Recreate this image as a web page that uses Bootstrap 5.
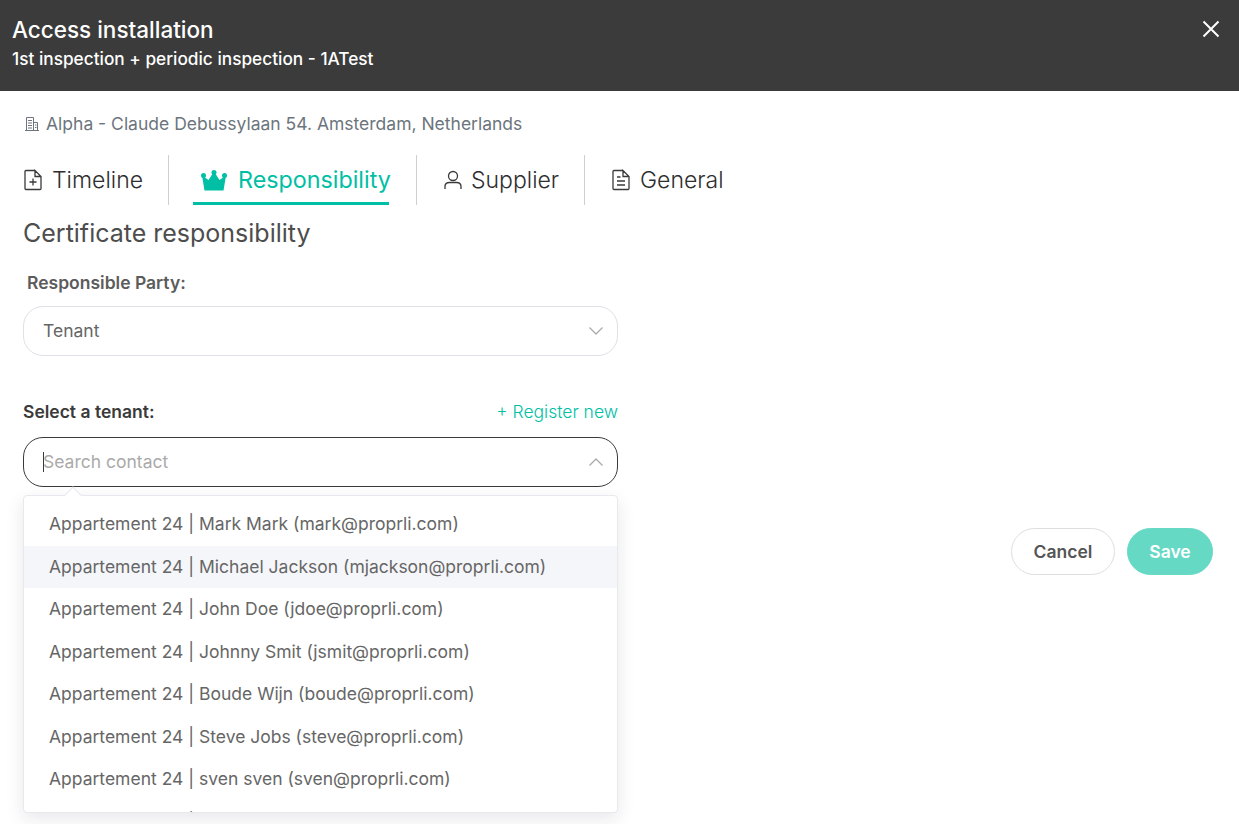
<!DOCTYPE html>
<html lang="en">
<head>
<meta charset="utf-8">
<title>Access installation</title>
<link href="https://cdn.jsdelivr.net/npm/bootstrap@5.3.0/dist/css/bootstrap.min.css" rel="stylesheet">
<style>
html,body{height:100%;}
body{font-family:Inter,"Liberation Sans",sans-serif;background:#fff;color:#3a3a3a;overflow:hidden;}
.head-bar{height:91px;background:#3b3b3b;color:#fff;padding:15px 18px 0 12px;}
.head-title{font-size:22.500px;font-weight:500;line-height:30px;margin:0;}
.head-sub{font-size:17.250px;font-weight:500;line-height:28px;margin:0;}
.close-x{background:none;border:0;padding:0;width:20px;height:20px;color:#fff;display:block;}
.page-body{padding:0 26px 0 23px;}
.loc-line{font-size:17.500px;line-height:24px;color:#6c757d;padding-top:21px;height:64px;}
.loc-ico{margin-right:5px;}
.tab-row{height:50px;}
.tab-item{display:flex;align-items:center;height:50px;font-size:23px;font-weight:300;line-height:36px;color:#2e2e2e;border-right:1px solid #cfcfcf;white-space:nowrap;text-decoration:none;position:relative;}
.tab-item:last-child{border-right:0;}
.tab-one{width:146px;}
.tab-two{width:248px;padding-left:32px;color:#00bfa5;font-weight:400;font-size:23.300px;}
.tab-two .tab-ico{margin-right:11px;}
.tab-three{width:168px;padding-left:26px;}
.tab-three .tab-ico{margin-right:8px;}
.tab-four{padding-left:26px;}
.tab-two::after{content:"";position:absolute;left:24px;width:196px;bottom:0;height:3px;background:#00bfa5;}
.tab-ico{flex:none;margin-right:9px;}
.sec-title{font-size:25px;line-height:36px;font-weight:400;margin:10px 0 0;color:#4d4d4d;}
.form-col{width:595px;}
.lbl-a{font-size:17.500px;font-weight:600;color:#5c5c5c;line-height:24px;margin:20px 0 11px 4px;display:block;}
.lbl-b{font-size:17.500px;font-weight:600;color:#3a3a3a;line-height:24px;margin:0;}
.reg-link{font-size:17.500px;font-weight:300;line-height:24px;color:#00bfa5;text-decoration:none;}
.tenant-head{margin-top:44px;margin-bottom:13px;}
.sel-box{height:50px;border:1px solid #e0e0e6;border-radius:20px;display:flex;align-items:center;justify-content:space-between;padding:0 13px 0 19px;font-size:17.500px;color:#666;}
.sel-open{border-color:#3a3a3a;}
.search-ph{color:#aaa;line-height:20px;position:relative;}
.search-ph::before{content:"";position:absolute;left:0;top:0;bottom:0;width:1px;background:#3a3a3a;}
.drop-wrap{position:relative;}
.drop-menu{position:absolute;left:0;right:0;top:8px;height:318px;overflow:hidden;background:#fff;border:1px solid #e8e8ee;border-radius:4px;box-shadow:0 6px 18px rgba(30,30,60,.1);padding-top:7px;z-index:5;}
.drop-arrow{position:absolute;left:44px;top:2px;width:12px;height:12px;background:#fff;border-left:1px solid #e8e8ee;border-top:1px solid #e8e8ee;transform:rotate(45deg);z-index:6;}
.drop-line{height:42.500px;line-height:42.500px;padding-left:25px;font-size:17.500px;color:#666;white-space:nowrap;}
.drop-hover{background:#f5f6fa;}
.act-row{margin-top:41px;}
.btn-cancel,.btn-save{height:47px;border-radius:24px;font-size:17.500px;font-weight:600;padding:2px 0 0;}
.btn-cancel{width:104px;background:#fff;border:1px solid #dedede;color:#555;}
.btn-save{width:86px;background:#66d9c5;border:1px solid #66d9c5;color:#fff;}
.btn-cancel:hover{background:#fff;color:#555;border-color:#dedede;}
.btn-save:hover{background:#66d9c5;color:#fff;border-color:#66d9c5;}
</style>
</head>
<body>
<header class="head-bar d-flex justify-content-between align-items-start">
  <div>
    <h1 class="head-title">Access installation</h1>
    <p class="head-sub">1st inspection + periodic inspection - 1ATest</p>
  </div>
  <button class="close-x" aria-label="Close"><svg width="20" height="20" viewBox="0 0 20 20" fill="none" stroke="currentColor" stroke-width="2"><path d="M2.500 2.500L17.500 17.500M17.500 2.500L2.500 17.500"/></svg></button>
</header>
<main class="page-body">
  <div class="loc-line d-flex align-items-start">
    <svg class="flex-none mt-1 loc-ico" width="18" height="16" viewBox="0 0 16 16" fill="none" stroke="#6c757d" stroke-width="1"><path d="M1 14.500H15M2.500 14.500V1.500H9.500V14.500M9.500 6.500H13.500V14.500M4 4.500H8M4 7H8M4 9.500H8M4 12H8M11 9H12.500M11 11.500H12.500"/></svg>
    <span>Alpha - Claude Debussylaan 54. Amsterdam, Netherlands</span>
  </div>
  <nav class="tab-row d-flex">
    <a class="tab-item tab-one" href="#"><svg class="tab-ico" width="20" height="22" viewBox="0 0 20 22" fill="none" stroke="#3a3a3a" stroke-width="1.300"><path d="M12 1.500H3A1 1 0 0 0 2 2.500V19.500A1 1 0 0 0 3 20.500H17A1 1 0 0 0 18 19.500V7.500L12 1.500V7.500H18M10 9.500V16.500M6.500 13H13.500"/></svg>Timeline</a>
    <a class="tab-item tab-two" href="#"><svg class="tab-ico" width="26" height="21" viewBox="0 0 26 21" fill="#00bfa5"><path d="M1 5.500L7.500 10L13 1.500L18.500 10L25 5.500L22.500 20.500H3.500Z"/><circle cx="2.500" cy="5.500" r="2.500"/><circle cx="13" cy="2.500" r="2.500"/><circle cx="23.500" cy="5.500" r="2.500"/></svg>Responsibility</a>
    <a class="tab-item tab-three" href="#"><svg class="tab-ico" width="20" height="20" viewBox="0 0 20 20" fill="none" stroke="#3a3a3a" stroke-width="1.300"><circle cx="10" cy="6" r="4.500"/><path d="M2 19V16.500C2 14 4 12.500 6.500 12.500H13.500C16 12.500 18 14 18 16.500V19"/></svg>Supplier</a>
    <a class="tab-item tab-four" href="#"><svg class="tab-ico" width="20" height="22" viewBox="0 0 20 22" fill="none" stroke="#3a3a3a" stroke-width="1.300"><path d="M12 1.500H3A1 1 0 0 0 2 2.500V19.500A1 1 0 0 0 3 20.500H17A1 1 0 0 0 18 19.500V7.500L12 1.500V7.500H18M6 8H9.500M6 12H14M6 16H14"/></svg>General</a>
  </nav>
  <h2 class="sec-title">Certificate responsibility</h2>
  <div class="form-col">
    <label class="lbl-a">Responsible Party:</label>
    <div class="sel-box"><span>Tenant</span><svg width="16" height="10" viewBox="0 0 16 10" fill="none" stroke="#aaa" stroke-width="1.300"><path d="M1.500 1.500L8 8L14.500 1.500"/></svg></div>
    <div class="d-flex justify-content-between align-items-center tenant-head">
      <span class="lbl-b">Select a tenant:</span>
      <a class="reg-link" href="#">+ Register new</a>
    </div>
    <div class="sel-box sel-open"><span class="search-ph">Search contact</span><svg width="16" height="10" viewBox="0 0 16 10" fill="none" stroke="#aaa" stroke-width="1.300"><path d="M1.500 8.500L8 2L14.500 8.500"/></svg></div>
    <div class="drop-wrap">
      <div class="drop-arrow"></div>
      <div class="drop-menu">
        <div class="drop-line">Appartement 24 | Mark Mark (mark@proprli.com)</div>
        <div class="drop-line drop-hover">Appartement 24 | Michael Jackson (mjackson@proprli.com)</div>
        <div class="drop-line">Appartement 24 | John Doe (jdoe@proprli.com)</div>
        <div class="drop-line">Appartement 24 | Johnny Smit (jsmit@proprli.com)</div>
        <div class="drop-line">Appartement 24 | Boude Wijn (boude@proprli.com)</div>
        <div class="drop-line">Appartement 24 | Steve Jobs (steve@proprli.com)</div>
        <div class="drop-line">Appartement 24 | sven sven (sven@proprli.com)</div>
        <div class="drop-line">Appartement 24 | Test Test (test@proprli.com)</div>
      </div>
    </div>
  </div>
  <div class="act-row d-flex justify-content-end gap-2">
    <button class="btn btn-cancel me-1">Cancel</button>
    <button class="btn btn-save">Save</button>
  </div>
</main>
<script src="https://cdn.jsdelivr.net/npm/bootstrap@5.3.0/dist/js/bootstrap.bundle.min.js"></script>
</body>
</html>
